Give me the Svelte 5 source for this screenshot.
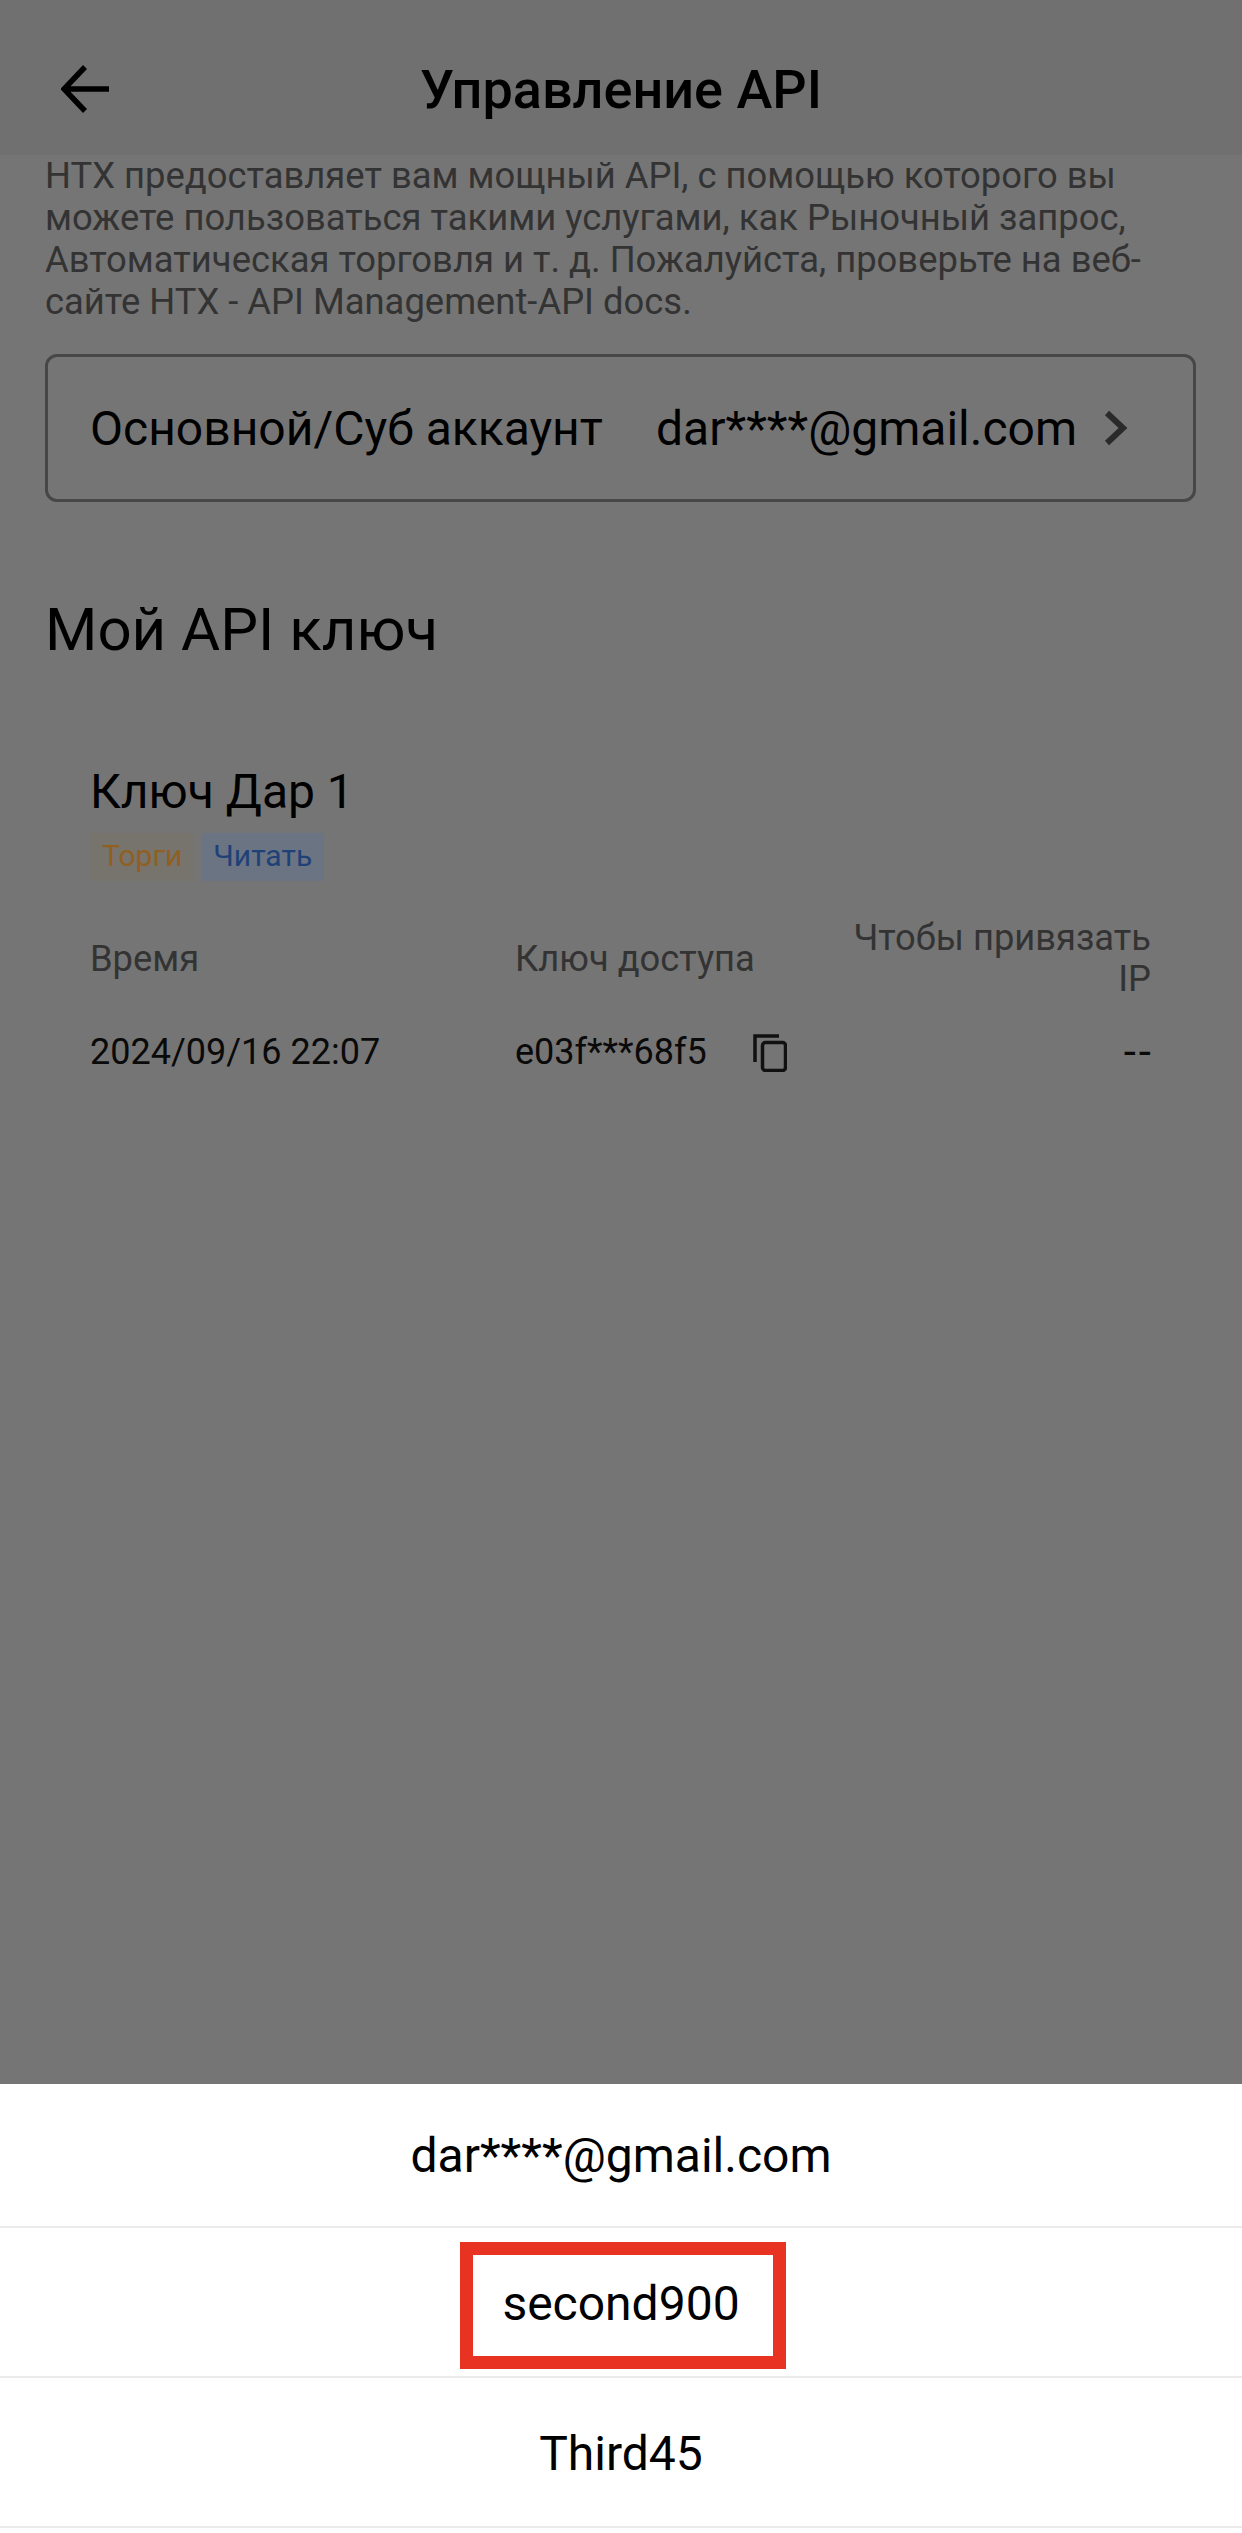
<script>
  const rows = [
    { time: "2024/09/16 22:07", key: "e03f***68f5", ip: "--" },
  ];
  const accounts = ["dar****@gmail.com", "second900", "Third45"];
</script>

<div class="screen">
  <header class="topbar">
    <svg class="back" viewBox="0 0 48 48" width="48" height="48" fill="none" stroke="#000" stroke-width="5.5">
      <path d="M48 24H3M24 2 3 24l21 22" />
    </svg>
    <h1>Управление API</h1>
  </header>

  <main class="content">
    <p class="intro">
      HTX предоставляет вам мощный API, с помощью которого вы можете пользоваться такими услугами, как Рыночный запрос, Автоматическая торговля и т. д. Пожалуйста, проверьте на веб-сайте HTX - API Management-API docs.
    </p>

    <div class="account">
      <span class="account-label">Основной/Суб аккаунт</span>
      <span class="account-value">dar****@gmail.com</span>
      <svg class="chevron" viewBox="0 0 24 36" width="24" height="36" fill="none" stroke="#2a2a2a" stroke-width="6">
        <path d="M3 3l16 15L3 33" />
      </svg>
    </div>

    <h2>Мой API ключ</h2>

    <section class="key">
      <div class="key-name">Ключ Дар 1</div>
      <div class="tags">
        <span class="tag trade">Торги</span>
        <span class="tag read">Читать</span>
      </div>
      <div class="grid head">
        <span>Время</span>
        <span>Ключ доступа</span>
        <span class="right">Чтобы привязать IP</span>
      </div>
      {#each rows as row}
        <div class="grid row">
          <span>{row.time}</span>
          <span class="key-cell">
            {row.key}
            <svg viewBox="0 0 34 38" width="34" height="38" fill="none" stroke="#111" stroke-width="3.5">
              <path d="M2 28V2h24" />
              <rect x="9.5" y="8.5" width="23" height="28" rx="3" />
            </svg>
          </span>
          <span class="right dash">{row.ip}</span>
        </div>
      {/each}
    </section>
  </main>

  <div class="sheet">
    {#each accounts as name, i}
      <div class="sheet-row" class:first={i === 0}>
        <span>{name}</span>
        {#if i === 1}
          <div class="highlight"></div>
        {/if}
      </div>
    {/each}
  </div>
</div>

<style>
  :global(body) {
    margin: 0;
    background: #757575;
  }
  .screen {
    display: flex;
    flex-direction: column;
    width: 1242px;
    height: 2533px;
    overflow: hidden;
    background: #757575;
    font-family: Roboto, "Noto Sans", sans-serif;
    color: #000;
  }
  .topbar {
    position: relative;
    display: flex;
    align-items: center;
    justify-content: center;
    height: 155px;
    padding-top: 24px;
    box-sizing: border-box;
    background: #707070;
  }
  .back {
    position: absolute;
    left: 61px;
    top: 65px;
  }
  h1 {
    margin: 0;
    font-size: 54px;
    font-weight: 500;
  }
  .content {
    flex: 1;
    padding: 0 45px 0 45px;
  }
  .intro {
    margin: 0;
    font-size: 36.4px;
    line-height: 42px;
    color: #333;
  }
  .account {
    display: flex;
    align-items: center;
    height: 148px;
    box-sizing: border-box;
    margin-top: 31px;
    margin-right: 1px;
    padding: 0 42px;
    border: 3px solid #474747;
    border-radius: 12px;
    font-size: 48px;
  }
  .account-value {
    margin-left: auto;
  }
  .chevron {
    margin-left: 27px;
    margin-right: 23px;
  }
  h2 {
    margin: 93px 0 0;
    font-size: 60px;
    font-weight: 400;
    line-height: 70px;
  }
  .key {
    margin-top: 99px;
    padding: 0 46px 0 45px;
  }
  .key-name {
    font-size: 48px;
    line-height: 56px;
  }
  .tags {
    display: flex;
    gap: 7px;
    margin-top: 13px;
  }
  .tag {
    height: 48px;
    padding: 0 12px;
    font-size: 30px;
    line-height: 46px;
  }
  .trade {
    background: #77736d;
    color: #8f601f;
  }
  .read {
    background: #6b7483;
    color: #204178;
  }
  .grid {
    display: grid;
    grid-template-columns: 425px 1fr 300px;
    align-items: center;
    font-size: 36px;
    line-height: 41px;
  }
  .head {
    margin-top: 36px;
    font-size: 36.3px;
    color: #333;
  }
  .row {
    margin-top: 33px;
    color: #0a0a0a;
  }
  .right {
    text-align: right;
  }
  .dash {
    font-size: 44px;
    letter-spacing: 3px;
    margin-right: -3px;
  }
  .key-cell {
    display: flex;
    align-items: center;
    gap: 46px;
    white-space: nowrap;
  }
  .sheet {
    padding-bottom: 5px;
    background: #fff;
    font-size: 48px;
  }
  .sheet-row {
    position: relative;
    display: flex;
    align-items: center;
    justify-content: center;
    height: 150px;
    padding-top: 2px;
    box-sizing: border-box;
    border-bottom: 2px solid #ebebeb;
  }
  .sheet-row.first {
    height: 144px;
    padding-top: 0;
  }
  .highlight {
    position: absolute;
    left: 460px;
    top: 14px;
    width: 326px;
    height: 127px;
    box-sizing: border-box;
    border: 13px solid #e83323;
  }
</style>
